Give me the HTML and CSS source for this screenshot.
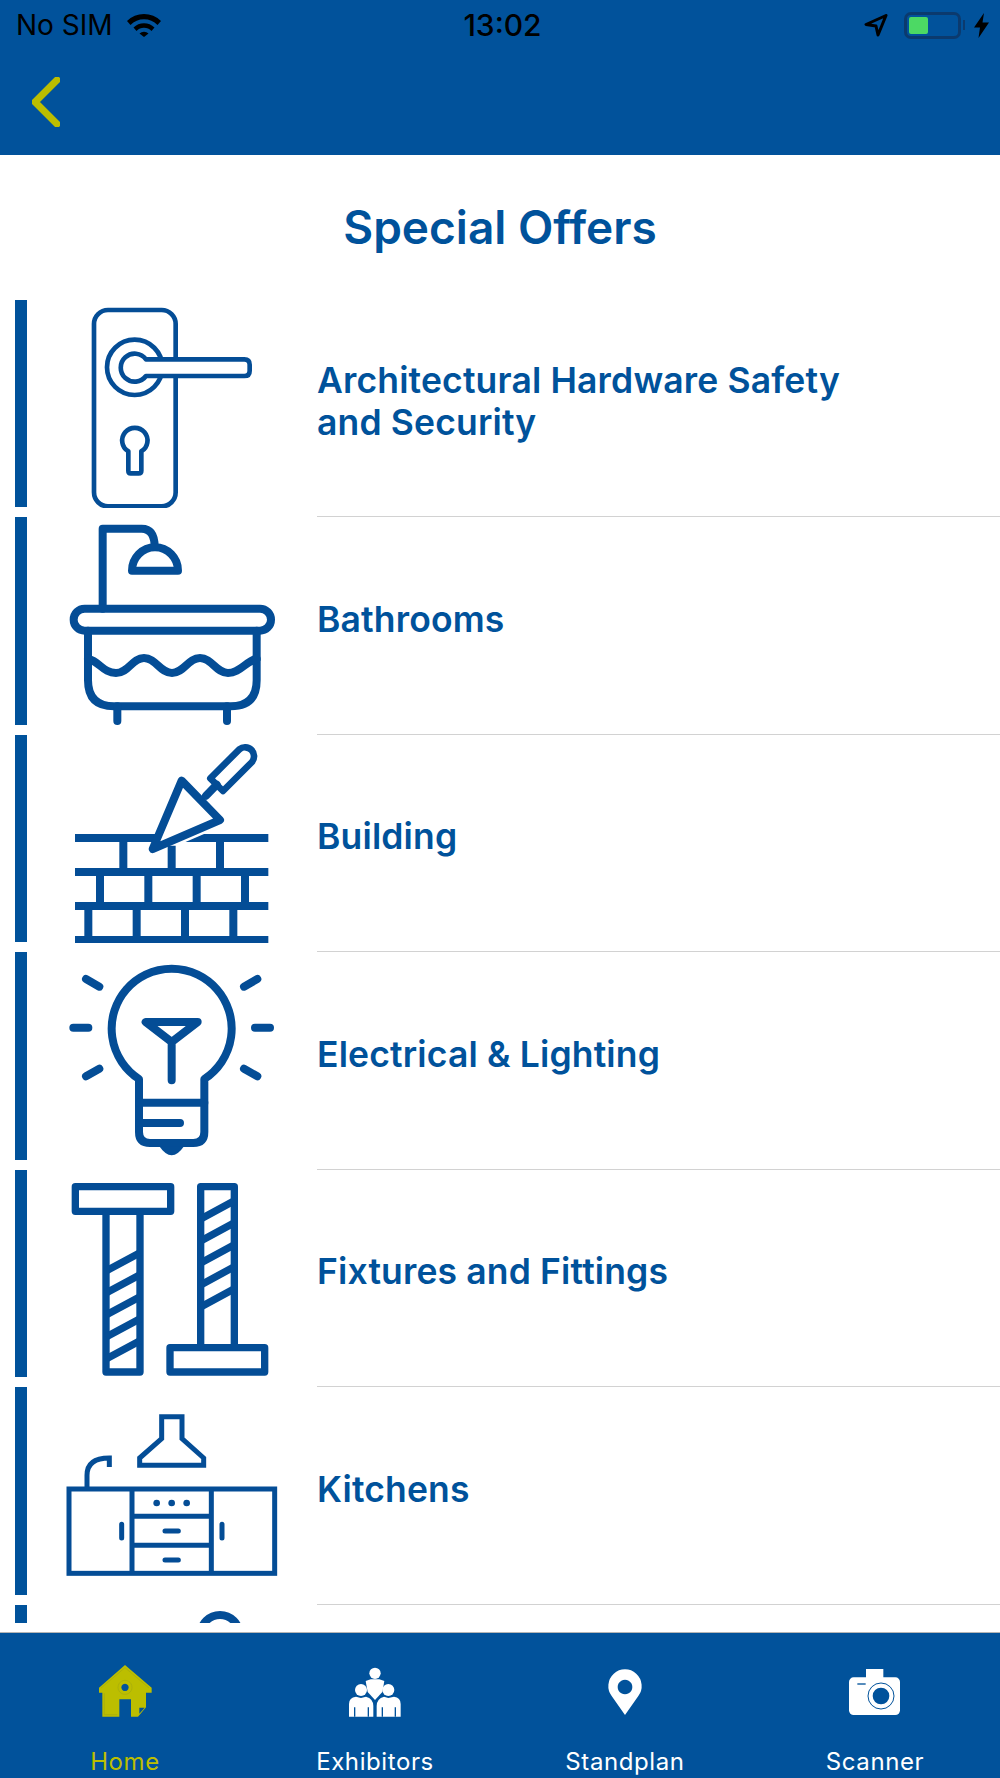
FILE: index.html
```html
<!DOCTYPE html>
<html lang="en">
<head>
  <meta charset="UTF-8">
  <meta name="viewport" content="width=device-width, initial-scale=1.0">
  <title>Special Offers</title>
  <link rel="stylesheet" href="styles.css">
</head>
<body>
  <!-- Header -->
  <div class="header">
    <div class="statusbar">
      <div class="status-left">
        <span>No SIM</span>
        <svg class="wifi" viewBox="0 0 34 24">
          <path d="M0 8A24 24 0 0 1 34 8L30.500 12A19 19 0 0 0 3.500 12Z"/>
          <path d="M6.500 14.500A15 15 0 0 1 27.500 14.500L24.500 18A10.500 10.500 0 0 0 9.500 18Z"/>
          <path d="M12.500 20.500A6.500 6.500 0 0 1 21.500 20.500L17 24Z"/>
        </svg>
      </div>
      <div class="status-time">13:02</div>
      <div class="status-right">
        <svg class="arrow" viewBox="0 0 24 23">
          <path d="M22 1.500 2 10.500l10 1.500 2 9z"/>
        </svg>
        <div class="battery"><div class="battery-fill"></div></div>
        <div class="battery-nub"></div>
        <svg class="bolt" viewBox="0 0 15 25">
          <path d="M10 0 0 14.500h6L4.500 25 15 9.500H8.500z"/>
        </svg>
      </div>
    </div>
    <div class="navrow">
      <svg class="back" viewBox="0 0 28 50">
        <path d="M25 3 3 25l22 22"/>
      </svg>
    </div>
  </div>

  <div class="title">Special Offers</div>

  <!-- Categories -->
  <div class="list">
    <div class="row">
      <div class="bar"></div>
      <div class="row-icon">
        <svg class="ic ic-door" viewBox="81 28 867 624">
          <rect x="282" y="58" width="245" height="589" rx="42"/>
          <circle cx="404" cy="230" r="83"/>
          <path class="solid" d="M438 206H733Q749 206 749 222V240Q749 256 733 256H438A42 42 0 1 1 438 206Z"/>
          <path d="M385 482A38 38 0 1 1 424 482V540Q424 548 416 548H392Q385 548 385 540Z"/>
        </svg>
      </div>
      <div class="label"><span>Architectural Hardware Safety and Security</span></div>
    </div>

    <div class="row">
      <div class="bar"></div>
      <div class="row-icon">
        <svg class="ic" viewBox="81 680 867 624">
          <path d="M308 955V715H425Q464 715 464 770"/>
          <path d="M396 841A68 69 0 0 1 534 841Z"/>
          <rect x="221" y="955" width="592" height="66" rx="33"/>
          <path d="M264 1021V1170Q264 1248 342 1248H692Q770 1248 770 1170V1021"/>
          <path d="M264 1105C300 1115 310 1148 348 1148S396 1103 432 1103S480 1148 516 1148S564 1103 600 1103S648 1148 684 1148S735 1115 770 1105"/>
          <path d="M352 1248V1292M681 1248V1292"/>
        </svg>
      </div>
      <div class="label"><span>Bathrooms</span></div>
    </div>

    <div class="row">
      <div class="bar"></div>
      <div class="row-icon">
        <svg class="ic ic-butt" viewBox="81 13 867 624">
          <path d="M500 322H805"/>
          <path class="halo" d="M545 150 660 268 458 355Z"/>
          <path d="M225 322H470M225 424H805M225 526H805M225 628H805"/>
          <path d="M370 322V424M515 345V424M660 322V424"/>
          <path d="M300 424V526M445 424V526M590 424V526M735 424V526"/>
          <path d="M265 526V628M410 526V628M555 526V628M700 526V628"/>
          <path class="solid rounded" d="M545 150 660 268 458 355Z"/>
          <path class="rounded" d="M618 195 650 162"/>
          <path class="rounded ic-handle" d="M631 143 718 56A27 27 0 0 1 756 94L669 181Z"/>
        </svg>
      </div>
      <div class="label"><span>Building</span></div>
    </div>

    <div class="row">
      <div class="bar"></div>
      <div class="row-icon">
        <svg class="ic" viewBox="81 665 867 624">
          <path d="M417 1046A180 180 0 1 1 613 1046V1205Q613 1238 580 1238H450Q417 1238 417 1205Z"/>
          <path d="M417 1117H613M417 1178H540"/>
          <path class="fill" d="M478 1248Q515 1302 552 1248Z"/>
          <path d="M437 875H593L515 935ZM515 935V1050"/>
          <path d="M220 892H265M765 892H810M258 746 298 769M772 746 732 769M258 1038 298 1015M772 1038 732 1015"/>
        </svg>
      </div>
      <div class="label"><span>Electrical &amp; Lighting</span></div>
    </div>

    <div class="row">
      <div class="bar"></div>
      <div class="row-icon">
        <svg class="ic ic-screw" viewBox="81 28 867 624">
          <rect x="226" y="78" width="286" height="74"/>
          <path d="M318 152V634H420V152"/>
          <path d="M318 331 420 276M318 397 420 342M318 463 420 408M318 529 420 474M318 595 420 540"/>
          <rect x="510" y="561" width="284" height="73"/>
          <path d="M602 561V78H703V561"/>
          <path d="M602 175 703 120M602 241 703 186M602 307 703 252M602 373 703 318M602 439 703 384"/>
        </svg>
      </div>
      <div class="label"><span>Fixtures and Fittings</span></div>
    </div>

    <div class="row">
      <div class="bar"></div>
      <div class="row-icon">
        <svg class="ic ic-kitchen" viewBox="81 680 867 624">
          <path d="M485 769H546V835L611 893V915H419V893L485 835Z"/>
          <path d="M261 980V945C261 910 285 893 328 893V920"/>
          <rect x="207" y="986" width="617" height="253"/>
          <path d="M396 986V1239M634 986V1239M396 1068H634M396 1155H634"/>
          <path class="rounded" d="M365 1092V1133M666 1092V1133M495 1112H535M495 1199H535"/>
          <circle class="fill" cx="470" cy="1028" r="10"/>
          <circle class="fill" cx="515" cy="1028" r="10"/>
          <circle class="fill" cx="560" cy="1028" r="10"/>
        </svg>
      </div>
      <div class="label"><span>Kitchens</span></div>
    </div>

    <div class="row">
      <div class="bar"></div>
      <div class="row-icon">
        <svg class="ic" viewBox="81 1332 867 624">
          <circle cx="660" cy="1420" r="58"/>
        </svg>
      </div>
      <div class="label"></div>
    </div>
  </div>

  <!-- Tab bar -->
  <div class="tabbar">
    <div class="tab active">
      <svg class="tab-icon" viewBox="270 186 210 180">
        <path fill-rule="evenodd" d="M375 195 455 263V278H438V322L414 350H393V298H358V350H307V278H297V263ZM375 251a11 11 0 1 0 .01 0Z"/>
        <path class="home-fold" d="M418 323H434L418 341Z"/>
        <path class="home-line" d="M303 264 375 203 447 264M313 280V344H352M375 241a21 21 0 1 0 .01 0"/>
      </svg>
      <span>Home</span>
    </div>
    <div class="tab">
      <svg class="tab-icon" viewBox="1020 186 210 180">
        <circle cx="1125" cy="220" r="17"/>
        <path d="M1097 243 1112 238H1138L1153 243 1147 276 1125 300 1103 276Z"/>
        <circle cx="1083" cy="270" r="18"/>
        <circle cx="1165" cy="270" r="18"/>
        <path d="M1047 350V312Q1047 292 1068 290L1083 294 1098 290Q1120 296 1120 318V350Z"/>
        <path d="M1130 350V318Q1130 296 1152 290L1165 294 1182 290Q1202 292 1202 312V350Z"/>
        <path class="tab-cut" d="M1064 322V350M1105 322V350M1147 322V350M1186 322V350"/>
      </svg>
      <span>Exhibitors</span>
    </div>
    <div class="tab">
      <svg class="tab-icon" viewBox="270 186 210 180">
        <path fill-rule="evenodd" d="M375 345 335 288A50 50 0 1 1 415 288ZM375 239a22 22 0 1 0 .01 0Z"/>
      </svg>
      <span>Standplan</span>
    </div>
    <div class="tab">
      <svg class="tab-icon" viewBox="1020 186 210 180">
        <rect x="1098" y="207" width="52" height="30"/>
        <rect x="1047" y="232" width="153" height="113" rx="14"/>
        <path class="tab-cut" d="M1072 252H1097"/>
        <circle class="cam-ring" cx="1143" cy="288" r="39"/>
        <circle class="cam-lens" cx="1143" cy="288" r="25"/>
      </svg>
      <span>Scanner</span>
    </div>
  </div>
</body>
</html>
```

FILE: styles.css
```css
body {
  margin: 0;
  height: 1778px;
  overflow: hidden;
  font-family: Inter, "Liberation Sans", sans-serif;
  background-color: #ffffff;
  color: #00529b;
}

/* Header */
.header {
  height: 155px;
  background-color: #01529b;
}

.statusbar {
  display: grid;
  grid-template-columns: 1fr auto 1fr;
  align-items: center;
  height: 50px;
  padding: 0 11px 0 16px;
  color: #000000;
  font-size: 28px;
}

.status-left {
  display: flex;
  align-items: center;
  gap: 14px;
}

.wifi {
  width: 34px;
  height: 24px;
  fill: #000000;
}

.status-time {
  font-weight: 500;
  font-size: 30px;
}

.status-right {
  display: flex;
  align-items: center;
  justify-content: flex-end;
}

.arrow {
  width: 24px;
  height: 23px;
  margin-right: 16px;
  fill: none;
  stroke: #000000;
  stroke-width: 3;
  stroke-linejoin: round;
}

.battery {
  box-sizing: border-box;
  width: 57px;
  height: 27px;
  padding: 2px;
  border: 3px solid #0b3a6e;
  border-radius: 7px;
}

.battery-fill {
  width: 19px;
  height: 100%;
  background-color: #4cd964;
  border-radius: 2px;
}

.battery-nub {
  width: 2px;
  height: 10px;
  margin: 0 9px 0 2px;
  background-color: #0b3a6e;
}

.bolt {
  width: 15px;
  height: 25px;
  fill: #000000;
}

.navrow {
  padding: 27px 0 0 32px;
}

.back {
  display: block;
  width: 28px;
  height: 50px;
  fill: none;
  stroke: #bcbe00;
  stroke-width: 7;
  stroke-linecap: round;
  stroke-linejoin: round;
}

/* Title */
.title {
  display: flex;
  justify-content: center;
  align-items: center;
  height: 144.5px;
  font-size: 46px;
  font-weight: 600;
}

/* Category list */
.list {
  height: 1323.5px;
  overflow: hidden;
}

.row {
  display: flex;
  height: 217.5px;
  padding-left: 15px;
}

.bar {
  flex: none;
  width: 12px;
  height: 207.5px;
  background-color: #00529b;
}

.row-icon {
  flex: none;
  width: 290px;
  height: 208px;
}

.ic {
  display: block;
  width: 289px;
  height: 208px;
  fill: none;
  stroke: #044d96;
  stroke-width: 24;
  stroke-linecap: round;
  stroke-linejoin: round;
}

.ic .solid {
  fill: #ffffff;
}

.ic .halo {
  fill: #ffffff;
  stroke: #ffffff;
  stroke-width: 40;
}

.ic .fill {
  fill: #044d96;
  stroke: none;
}

.ic-door {
  stroke-width: 14;
}

.ic-butt {
  stroke-linecap: butt;
}

.ic .rounded {
  stroke-linecap: round;
}

.ic .ic-handle {
  stroke-width: 20;
}

.ic-screw {
  stroke-width: 22;
  stroke-linecap: butt;
}

.ic-kitchen {
  stroke-width: 15;
  stroke-linecap: butt;
  stroke-linejoin: miter;
}

.label {
  flex: 1;
  display: flex;
  align-items: center;
  padding-bottom: 11px;
  border-bottom: 1px solid #d2d2d2;
  font-size: 35.5px;
  font-weight: 600;
  letter-spacing: 0.15px;
  line-height: 42px;
}

.label span {
  max-width: 560px;
}

/* Tab bar */
.tabbar {
  display: flex;
  box-sizing: border-box;
  height: 146px;
  margin-top: 9px;
  padding-top: 29px;
  background-color: #01529b;
  border-top: 1px solid #b5b5b5;
}

.tab {
  flex: 1;
  display: flex;
  flex-direction: column;
  align-items: center;
  color: #ffffff;
  font-size: 24px;
  letter-spacing: 0.6px;
}

.tab-icon {
  width: 70px;
  height: 60px;
  margin-bottom: 25px;
  fill: #ffffff;
}

.tab.active {
  color: #bcbe00;
}

.tab.active .tab-icon {
  fill: #bcbe00;
}

.tab-cut {
  fill: none;
  stroke: #01529b;
  stroke-width: 4;
}

.home-fold {
  fill: #01529b;
}

.home-line {
  fill: none;
  stroke: #a5a90f;
  stroke-width: 2;
}

.cam-ring {
  fill: none;
  stroke: #01529b;
  stroke-width: 3;
}

.cam-lens {
  fill: #01529b;
}
```
